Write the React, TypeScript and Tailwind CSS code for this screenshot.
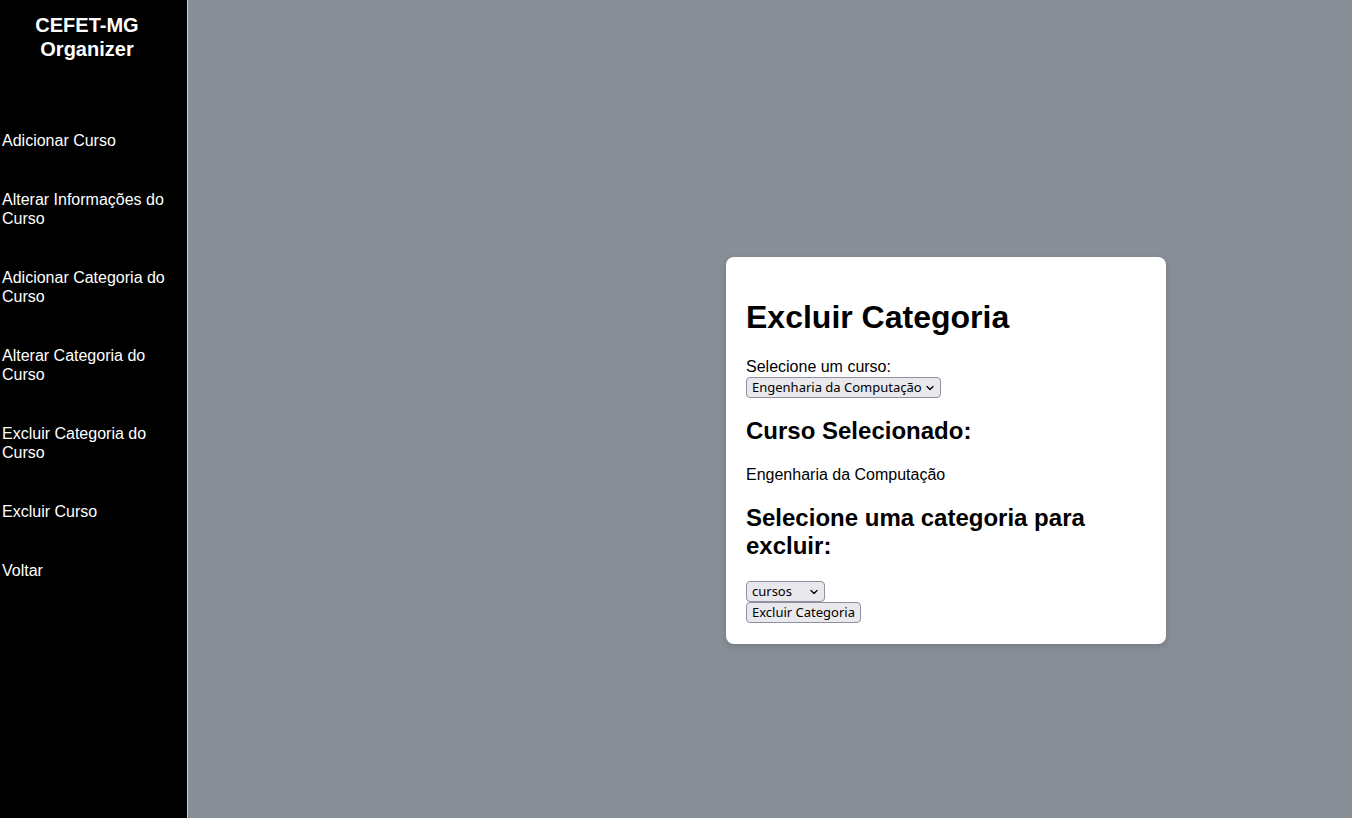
import { ChevronDown } from "lucide-react";

const links = [
  "Adicionar Curso",
  "Alterar Informações do Curso",
  "Adicionar Categoria do Curso",
  "Alterar Categoria do Curso",
  "Excluir Categoria do Curso",
  "Excluir Curso",
  "Voltar",
];

const Sidebar = () => (
  <aside className="w-[188px] shrink-0 bg-black border-r border-[#c9cdd1] text-white min-h-screen">
    <h2 className="w-[174px] pt-[13px] text-center text-[20px] leading-6 font-bold">
      CEFET-MG
      <br />
      Organizer
    </h2>
    <nav className="mt-[50px] flex flex-col">
      {links.map((link) => (
        <a key={link} href="#" className="py-5 pl-[2px] pr-2 text-[16px] leading-[19px]">
          {link}
        </a>
      ))}
    </nav>
  </aside>
);

const control =
  "font-['Noto_Sans',sans-serif] text-[13px] leading-[17px] h-[21px] bg-[#e9e9ed] border border-[#8f8f9d] rounded-[4px] text-black";

const Select = ({ width, value, className }: { width: string; value: string; className: string }) => (
  <div className={`relative ${width} ${className}`}>
    <select className={`${control} block w-full appearance-none pl-[5px] pr-[13px]`} defaultValue={value}>
      <option value={value}>{value}</option>
    </select>
    <ChevronDown
      size={12}
      strokeWidth={2.5}
      className="absolute right-[5px] top-[5px] pointer-events-none text-black"
    />
  </div>
);

export default function App() {
  return (
    <div className="flex min-h-screen bg-[#888e96] font-['Liberation_Sans',Arial,sans-serif] text-black">
      <Sidebar />
      <main className="flex-1 pl-[538px] pt-[257px]">
        <div className="w-[440px] bg-white rounded-lg shadow-[0_2px_6px_rgba(0,0,0,0.15)] px-5 pt-[21px] pb-[21px]">
          <h1 className="text-[32px] leading-[36.8px] font-bold my-[21.44px]">Excluir Categoria</h1>
          <label className="block text-[16px] leading-[18.4px]">Selecione um curso:</label>
          <Select width="w-[195px]" value="Engenharia da Computação" className="mt-px" />
          <h2 className="text-[24px] leading-[27.6px] font-bold mt-[19px] mb-[21px]">Curso Selecionado:</h2>
          <p className="text-[16px] leading-[18.4px]">Engenharia da Computação</p>
          <h2 className="text-[24px] leading-[27.6px] font-bold mt-[20px] mb-[22px]">
            Selecione uma categoria para excluir:
          </h2>
          <Select width="w-[79px]" value="cursos" className="" />
          <button className={`${control} block px-[5px]`}>Excluir Categoria</button>
        </div>
      </main>
    </div>
  );
}
